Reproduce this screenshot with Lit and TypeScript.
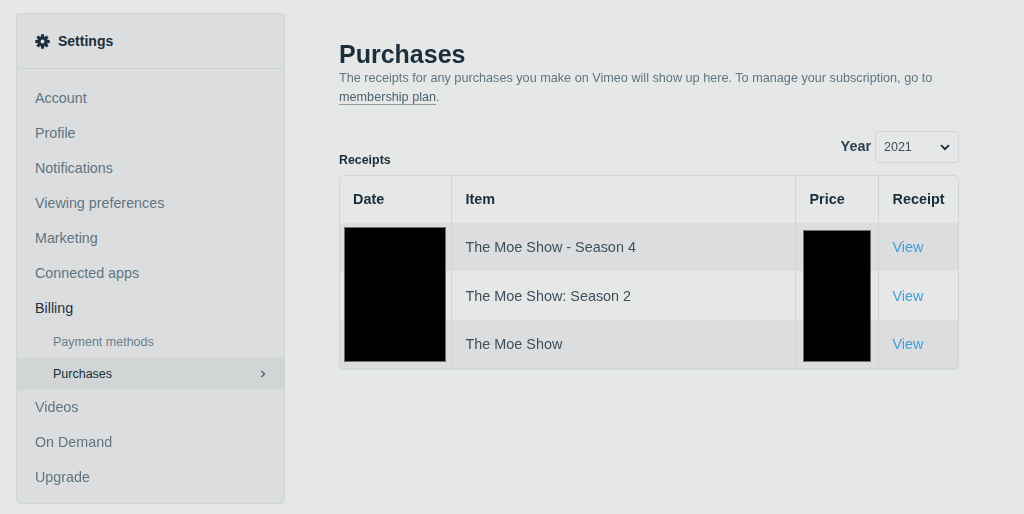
import { LitElement, html, css, svg } from "lit";
import { customElement } from "lit/decorators.js";

const gear = svg`<svg class="gear" viewBox="0 0 16 16" width="15" height="15"><g fill="#1a2e3b"><path fill-rule="evenodd" d="M8 2.6a5.4 5.4 0 1 0 0 10.8A5.4 5.4 0 0 0 8 2.6zM8 5.9a2.1 2.1 0 1 1 0 4.2 2.1 2.1 0 0 1 0-4.2z"/>${[0, 45, 90, 135, 180, 225, 270, 315].map(
  (a) => svg`<path transform="rotate(${a} 8 8)" d="M6.5 0.3h3l.3 3h-3.6z"/>`
)}</g></svg>`;

@customElement("app-root")
export class AppRoot extends LitElement {
  static styles = css`
    :host {
      display: block;
      width: 1024px;
      height: 514px;
      overflow: hidden;
      background: #e6e8e8;
      font-family: "Liberation Sans", Arial, sans-serif;
      color: #1a2e3b;
    }
    .page {
      display: flex;
      align-items: flex-start;
      padding: 13px 0 0 16px;
      filter: blur(0.45px);
    }
    .side {
      box-sizing: border-box;
      width: 269px;
      height: 491px;
      flex: none;
      background: #dcdddf;
      border: 1px solid #d0d5d7;
      border-radius: 4px;
    }
    .side-head {
      box-sizing: border-box;
      height: 55px;
      display: flex;
      align-items: center;
      gap: 8px;
      padding-left: 18px;
      border-bottom: 1px solid #ccd1d3;
      font-size: 14px;
      font-weight: 700;
    }
    .gear { flex: none; }
    .nav { padding-top: 11px; }
    .item {
      box-sizing: border-box;
      height: 35px;
      display: flex;
      align-items: center;
      padding-left: 18px;
      font-size: 14.3px;
      color: #5f7581;
    }
    .item.dark { color: #1f323e; }
    .item.low { padding-bottom: 1px; }
    .sub {
      height: 32px;
      display: flex;
      align-items: center;
      justify-content: space-between;
      padding: 0 18px 0 36px;
      font-size: 12.5px;
      color: #6b7f8a;
    }
    .sub.first { height: 33px; }
    .sub.active {
      background: #d1d5d6;
      color: #1a2e3b;
    }
    .main {
      box-sizing: border-box;
      width: 620px;
      margin-left: 54px;
      padding-top: 27px;
    }
    h1 {
      margin: 0;
      font-size: 25px;
      line-height: 28px;
      font-weight: 700;
      color: #1a2e3b;
    }
    .desc {
      margin: 1px 0 0;
      font-size: 12.67px;
      line-height: 19px;
      color: #5f7581;
      width: 610px;
    }
    .desc a {
      color: #4d626e;
      text-decoration: none;
      border-bottom: 1px solid #8d9ea7;
    }
    .bar {
      display: flex;
      justify-content: space-between;
      height: 36px;
      margin-top: 24px;
    }
    .receipts {
      align-self: flex-end;
      font-size: 12.4px;
      font-weight: 700;
      line-height: 14px;
    }
    .year {
      display: flex;
      align-items: flex-start;
      gap: 4px;
      font-size: 14.4px;
      font-weight: 700;
      color: #2b3f4c;
    }
    .year > span { line-height: 31px; }
    .select {
      box-sizing: border-box;
      width: 84px;
      height: 32px;
      display: flex;
      align-items: center;
      justify-content: space-between;
      padding: 0 8px;
      border: 1px solid #d2d7d9;
      border-radius: 3px;
      font-size: 12.5px;
      font-weight: 400;
      color: #3d505c;
    }
    .wrap {
      position: relative;
      margin-top: 8px;
      box-sizing: border-box;
      height: 194px;
      border: 1px solid #d0d5d7;
      border-radius: 5px;
      overflow: hidden;
      box-shadow: 0 1px 1px #d5d9da;
    }
    table {
      width: 100%;
      border-collapse: collapse;
      table-layout: fixed;
    }
    th, td {
      text-align: left;
      padding: 0 0 0 14px;
      border-left: 1px solid #d0d5d7;
      font-size: 14.4px;
    }
    th:first-child, td:first-child { border-left: 0; padding-left: 13px; }
    th {
      height: 47px;
      padding-bottom: 1px;
      box-sizing: border-box;
      font-weight: 700;
      color: #1a2e3b;
    }
    td { height: 47.7px; padding-top: 0.6px; color: #3d505c; }
    tbody tr:nth-child(odd) td { background: #dcdddf; }
    td a { color: #3f9fd8; text-decoration: none; }
    .redact {
      position: absolute;
      background: #000;
      border: 1px solid #6e6e6e;
      box-sizing: border-box;
    }
    .r1 { left: 4px; top: 51px; width: 102px; height: 135px; }
    .r2 { left: 463px; top: 54px; width: 68px; height: 132px; }
  `;

  render() {
    const items = ["Account", "Profile", "Notifications", "Viewing preferences", "Marketing", "Connected apps"];
    const rows = ["The Moe Show - Season 4", "The Moe Show: Season 2", "The Moe Show"];
    return html`
      <div class="page">
        <aside class="side">
          <div class="side-head">${gear}<span>Settings</span></div>
          <nav class="nav">
            ${items.map((i) => html`<div class="item">${i}</div>`)}
            <div class="item dark">Billing</div>
            <div class="sub first">Payment methods</div>
            <div class="sub active">
              <span>Purchases</span>
              <svg width="6" height="8" viewBox="0 0 6 8"><path d="M1.5 1l3 3-3 3" fill="none" stroke="#4d626e" stroke-width="1.4"/></svg>
            </div>
            <div class="item low">Videos</div>
            <div class="item low">On Demand</div>
            <div class="item low">Upgrade</div>
          </nav>
        </aside>
        <main class="main">
          <h1>Purchases</h1>
          <p class="desc">The receipts for any purchases you make on Vimeo will show up here. To manage your subscription, go to <a>membership plan</a>.</p>
          <div class="bar">
            <div class="receipts">Receipts</div>
            <div class="year">
              <span>Year</span>
              <div class="select">
                <span>2021</span>
                <svg width="10" height="7" viewBox="0 0 10 7"><path d="M1 1.2l4 4 4-4" fill="none" stroke="#1a2e3b" stroke-width="1.8"/></svg>
              </div>
            </div>
          </div>
          <div class="wrap">
            <table>
              <colgroup><col style="width:111px" /><col style="width:344px" /><col style="width:83px" /><col /></colgroup>
              <thead><tr><th>Date</th><th>Item</th><th>Price</th><th>Receipt</th></tr></thead>
              <tbody>
                ${rows.map((r) => html`<tr><td></td><td>${r}</td><td></td><td><a>View</a></td></tr>`)}
              </tbody>
            </table>
            <div class="redact r1"></div>
            <div class="redact r2"></div>
          </div>
        </main>
      </div>
    `;
  }
}
